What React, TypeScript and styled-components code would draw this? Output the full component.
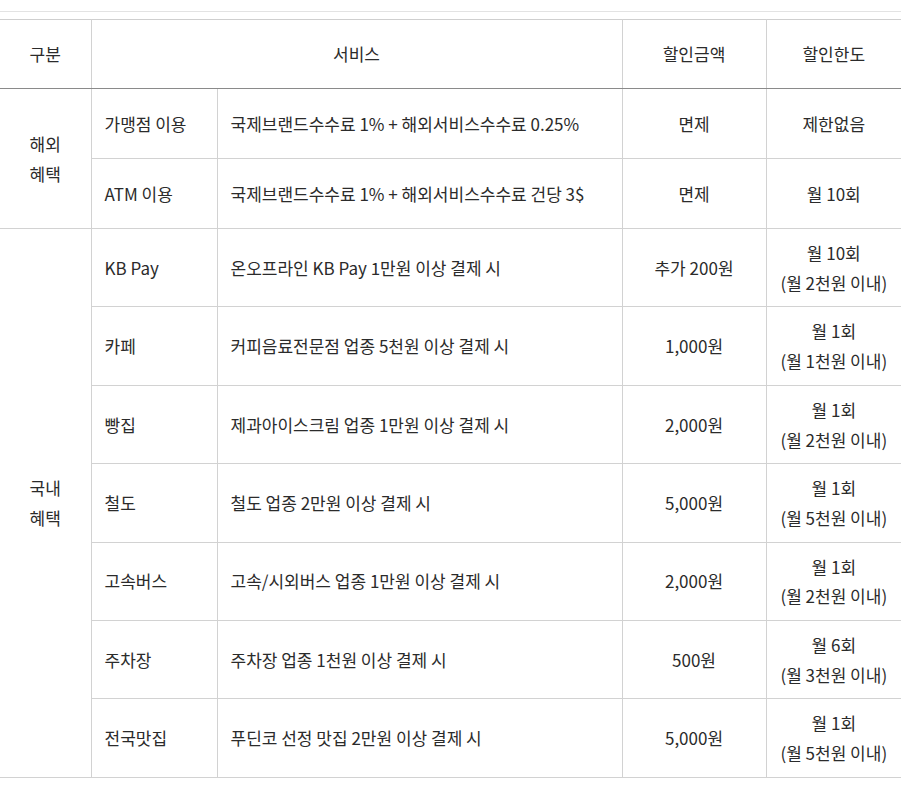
import React from 'react';
import styled, { createGlobalStyle } from 'styled-components';

const GlobalStyle = createGlobalStyle`
  html, body { margin: 0; padding: 0; background: #fff; }
  body {
    font-family: "Noto Sans CJK KR", "Noto Sans", sans-serif;
    color: #2b2b2b;
  }
`;

const Section = styled.section`
  margin-top: 11px;
  border-top: 1px solid #e3e3e3;
  padding-top: 7px;
`;

const Table = styled.table`
  width: 901px;
  border-collapse: collapse;
  table-layout: fixed;
  font-size: 17px;
  line-height: 29.7px;
  border-top: 1px solid #cfcfcf;
  border-bottom: 1px solid #cfcfcf;
`;

const HeadRow = styled.tr`
  height: 69px;
`;

const Row = styled.tr<{ $single?: boolean }>`
  height: ${(p) => (p.$single ? '70px' : 'auto')};
`;

const Th = styled.th<{ $last?: boolean }>`
  font-weight: normal;
  text-align: center;
  padding: 0 13px;
  border-bottom: 1px solid #8a8a8a;
  border-right: ${(p) => (p.$last ? 'none' : '1px solid #d2d2d2')};
  vertical-align: middle;
`;

const Td = styled.td<{ $align?: 'left' | 'center'; $last?: boolean }>`
  text-align: ${(p) => p.$align || 'center'};
  padding: 9px 13px;
  border-bottom: 1px solid #d2d2d2;
  border-right: ${(p) => (p.$last ? 'none' : '1px solid #d2d2d2')};
  vertical-align: middle;
  white-space: nowrap;
`;

const Line = styled.span`
  display: block;
`;

type Item = { name: string; service: string; amount: string; limit: string[] };

const overseas: Item[] = [
  { name: '가맹점 이용', service: '국제브랜드수수료 1% + 해외서비스수수료 0.25%', amount: '면제', limit: ['제한없음'] },
  { name: 'ATM 이용', service: '국제브랜드수수료 1% + 해외서비스수수료 건당 3$', amount: '면제', limit: ['월 10회'] },
];

const domestic: Item[] = [
  { name: 'KB Pay', service: '온오프라인 KB Pay 1만원 이상 결제 시', amount: '추가 200원', limit: ['월 10회', '(월 2천원 이내)'] },
  { name: '카페', service: '커피음료전문점 업종 5천원 이상 결제 시', amount: '1,000원', limit: ['월 1회', '(월 1천원 이내)'] },
  { name: '빵집', service: '제과아이스크림 업종 1만원 이상 결제 시', amount: '2,000원', limit: ['월 1회', '(월 2천원 이내)'] },
  { name: '철도', service: '철도 업종 2만원 이상 결제 시', amount: '5,000원', limit: ['월 1회', '(월 5천원 이내)'] },
  { name: '고속버스', service: '고속/시외버스 업종 1만원 이상 결제 시', amount: '2,000원', limit: ['월 1회', '(월 2천원 이내)'] },
  { name: '주차장', service: '주차장 업종 1천원 이상 결제 시', amount: '500원', limit: ['월 6회', '(월 3천원 이내)'] },
  { name: '전국맛집', service: '푸딘코 선정 맛집 2만원 이상 결제 시', amount: '5,000원', limit: ['월 1회', '(월 5천원 이내)'] },
];

const groups = [
  { label: ['해외', '혜택'], items: overseas, single: true },
  { label: ['국내', '혜택'], items: domestic, single: false },
];

export default function App() {
  return (
    <>
      <GlobalStyle />
      <Section>
        <Table>
          <colgroup>
            <col style={{ width: 91 }} />
            <col style={{ width: 126 }} />
            <col style={{ width: 405 }} />
            <col style={{ width: 144 }} />
            <col style={{ width: 135 }} />
          </colgroup>
          <thead>
            <HeadRow>
              <Th>구분</Th>
              <Th colSpan={2}>서비스</Th>
              <Th>할인금액</Th>
              <Th $last>할인한도</Th>
            </HeadRow>
          </thead>
          <tbody>
            {groups.map((g) =>
              g.items.map((it, i) => (
                <Row key={g.label.join('') + it.name} $single={g.single}>
                  {i === 0 && (
                    <Td rowSpan={g.items.length}>
                      {g.label.map((l) => (
                        <Line key={l}>{l}</Line>
                      ))}
                    </Td>
                  )}
                  <Td $align="left">{it.name}</Td>
                  <Td $align="left">{it.service}</Td>
                  <Td>{it.amount}</Td>
                  <Td $last>
                    {it.limit.map((l) => (
                      <Line key={l}>{l}</Line>
                    ))}
                  </Td>
                </Row>
              ))
            )}
          </tbody>
        </Table>
      </Section>
    </>
  );
}
